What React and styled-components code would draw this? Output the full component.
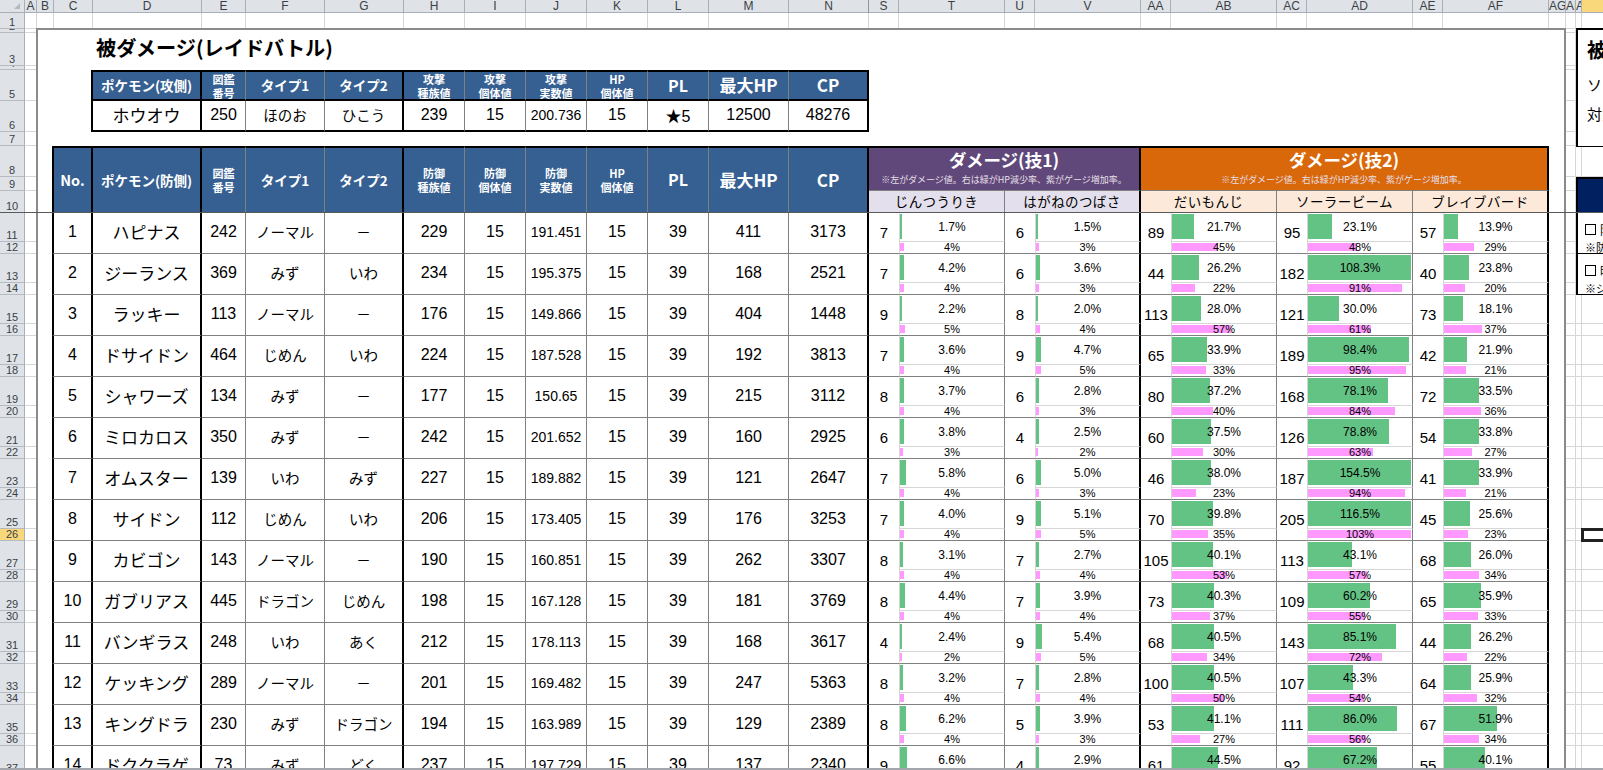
import React from 'react';
import styled, { createGlobalStyle } from 'styled-components';

const Global = createGlobalStyle`
  html, body { margin: 0; padding: 0; height: 770px; overflow: hidden; background: #fff; }
  #root { height: 770px; }
  * { box-sizing: border-box; }
`;

const SANS = `"Liberation Sans", "Noto Sans CJK JP", sans-serif`;
const HEAD = `"Noto Sans CJK JP", "Liberation Sans", sans-serif`;
const LINE = '#808080';
const LIGHT = '#d6d6d6';

const COLS = [
  ['rh', 25, ''], ['A', 12, 'A'], ['B', 17, 'B'], ['C', 39, 'C'], ['D', 109, 'D'], ['E', 44, 'E'], ['F', 79, 'F'], ['G', 79, 'G'],
  ['H', 61, 'H'], ['I', 61, 'I'], ['J', 61, 'J'], ['K', 61, 'K'], ['L', 61, 'L'], ['M', 80, 'M'], ['N', 80, 'N'],
  ['S', 30, 'S'], ['T', 106, 'T'], ['U', 30, 'U'], ['V', 106, 'V'], ['AA', 30, 'AA'], ['AB', 106, 'AB'], ['AC', 30, 'AC'],
  ['AD', 106, 'AD'], ['AE', 30, 'AE'], ['AF', 106, 'AF'], ['AG', 17, 'AG'], ['AH', 10, 'AI'], ['AJ', 6, 'A'], ['AK', 40, ''],
];
const columnTemplate = COLS.map(([n, w]) => `[${n}] ${w}px`).join(' ');

const FIXED_ROWS = [16, 4, 33, 4, 31, 31, 14, 31, 14, 22];
const ROW_COUNT = 38;
const rowHeights = Array.from({ length: ROW_COUNT }, (_, i) =>
  i < 10 ? FIXED_ROWS[i] : i % 2 === 0 ? 29 : 12
);
const rowTemplate = `13px ${rowHeights.map((h) => `${h}px`).join(' ')}`;

const Viewport = styled.div`
  height: 770px;
  width: 1603px;
  display: flex;
  flex-direction: column;
  overflow: hidden;
  font-family: ${SANS};
  color: #000;
`;
const Clip = styled.div`
  flex: 1;
  min-height: 0;
  overflow: hidden;
`;
const StatusEdge = styled.div`
  height: 2px;
  flex: none;
  background: #a3a7ad;
`;
const Sheet = styled.div`
  display: grid;
  grid-template-columns: ${columnTemplate};
  grid-template-rows: ${rowTemplate};
  width: 1603px;
`;

const Corner = styled.div`
  grid-column: rh;
  grid-row: 1;
  background: #dfe3e8;
  border-right: 1px solid #a9afb8;
  border-bottom: 1px solid #a9afb8;
  display: flex;
  align-items: flex-end;
  justify-content: flex-end;
  padding: 0 4px 3px 0;
`;
const CornerMark = styled.svg`
  width: 6px;
  height: 6px;
  fill: #b4b9c0;
`;
const ColHead = styled.div`
  grid-column: ${(p) => p.$col};
  grid-row: 1;
  background: ${(p) => (p.$active ? '#f9d87c' : '#dfe3e8')};
  border-right: 1px solid ${(p) => (p.$thick ? '#8f959d' : '#a9afb8')};
  border-bottom: 1px solid #a9afb8;
  font-size: 12px;
  line-height: 13px;
  color: #3a3f47;
  text-align: center;
  overflow: hidden;
  white-space: nowrap;
`;
const RowHead = styled.div`
  grid-column: rh;
  grid-row: ${(p) => p.$row + 1};
  background: ${(p) => (p.$active ? '#f9d87c' : '#dfe3e8')};
  border-right: 1px solid #a9afb8;
  border-bottom: 1px solid #b6bbc2;
  font-size: 11px;
  line-height: 11px;
  color: #3a3f47;
  display: flex;
  align-items: flex-end;
  justify-content: center;
  overflow: hidden;
`;
const GridLine = styled.div`
  grid-column: ${(p) => p.$col};
  grid-row: ${(p) => p.$row + 1};
  border-right: 1px solid ${LIGHT};
  border-bottom: 1px solid ${LIGHT};
`;
const Frame = styled.div`
  grid-column: B / AH;
  grid-row: 3 / -1;
  margin: -1px 0 0 -1px;
  background: #fff;
  border: 2px solid #8a8a8a;
  border-bottom: none;
`;
const FreezeLine = styled.div`
  grid-column: 1 / -1;
  grid-row: 11;
  align-self: end;
  height: 1px;
  background: #5a5a5a;
  z-index: 6;
`;

const Title = styled.div`
  grid-column: D / J;
  grid-row: 4;
  padding: 0 0 3px 3px;
  font-family: ${HEAD};
  font-weight: 700;
  font-size: 20.2px;
  line-height: 30px;
  white-space: nowrap;
  z-index: 1;
`;

const rightBorder = (k) =>
  k === 'thick' ? '2px solid #000' : k === 'grey' ? `1px solid ${LINE}` : k === 'light' ? `1px solid ${LIGHT}` : 'none';

const Cell = styled.div`
  grid-column: ${(p) => p.$col} / span ${(p) => p.$span || 1};
  grid-row: ${(p) => p.$row + 1} / span ${(p) => p.$rows || 1};
  z-index: 1;
  display: flex;
  align-items: center;
  justify-content: center;
  text-align: center;
  white-space: nowrap;
  overflow: hidden;
  border-right: ${(p) => rightBorder(p.$right)};
  border-left: ${(p) => (p.$left ? '2px solid #000' : 'none')};
  margin-left: ${(p) => (p.$left ? '-2px' : '0')};
  border-top: ${(p) => (p.$top ? '2px solid #000' : 'none')};
  border-bottom: ${(p) => p.$under || `1px solid ${LINE}`};
`;
const HeadCell = styled(Cell)`
  background: #366092;
  color: #fff;
  font-family: ${HEAD};
  font-weight: 700;
  font-size: ${(p) => p.$size || 13.5}px;
  line-height: ${(p) => (p.$size === 11 ? '14px' : '1.2')};
`;
const NameCell = styled(Cell)`
  font-family: ${HEAD};
  font-size: 17px;
  padding-bottom: 3px;
`;
const TypeCell = styled(Cell)`
  font-family: ${HEAD};
  font-size: 14.5px;
  padding-bottom: 3px;
`;
const NumCell = styled(Cell)`
  font-size: ${(p) => p.$size || 16}px;
  padding-bottom: 2px;
`;
const DamageHead = styled(Cell)`
  flex-direction: column;
  justify-content: flex-start;
  background: ${(p) => p.$bg};
  color: #fff;
  font-family: ${HEAD};
`;
const DamageTitle = styled.div`
  font-size: 17.5px;
  font-weight: 700;
  line-height: 24px;
`;
const DamageNote = styled.div`
  font-size: 9px;
  line-height: 12px;
  margin-top: 2px;
  color: #e6dfe6;
`;
const MoveHead = styled(Cell)`
  background: ${(p) => p.$bg};
  font-family: ${HEAD};
  font-size: 13.5px;
  letter-spacing: 0.4px;
  padding-bottom: 1px;
`;
const BarCell = styled(Cell)`
  display: grid;
  grid-template-columns: minmax(0, 1fr);
  grid-template-rows: minmax(0, 1fr);
  justify-content: stretch;
  justify-items: start;
  align-items: stretch;
  border-left: 1px solid ${LIGHT};
`;
const GreenBar = styled.div`
  grid-area: 1 / 1;
  margin: 1px 0 2px 0;
  background: #63c384;
`;
const PinkBar = styled.div`
  grid-area: 1 / 1;
  margin: 1px 0 2px 0;
  background: #ff99ff;
`;
const BarText = styled.div`
  grid-area: 1 / 1;
  justify-self: stretch;
  align-self: center;
  text-align: center;
  font-size: ${(p) => (p.$small ? 11 : 12)}px;
  line-height: ${(p) => (p.$small ? 11 : 14)}px;
  z-index: 1;
`;

const SideBox = styled.div`
  grid-column: AJ / -1;
  grid-row: ${(p) => p.$row + 1} / span ${(p) => p.$rows};
  z-index: 1;
  background: #fff;
  border-left: 2px solid #000;
  border-top: ${(p) => (p.$top ? '2px solid #000' : 'none')};
  border-bottom: 1px solid #000;
  overflow: hidden;
  white-space: nowrap;
`;
const InfoBox = styled(SideBox)`
  margin: -1px 0 -1px 0;
  padding: 5px 0 0 9px;
  display: flex;
  flex-direction: column;
  font-family: ${HEAD};
`;
const InfoTitle = styled.div`
  font-size: 20px;
  font-weight: 700;
  line-height: 30px;
  margin-bottom: 9px;
`;
const InfoLine = styled.div`
  font-size: 15px;
  line-height: 22px;
  margin-bottom: 7px;
`;
const NavyBox = styled(SideBox)`
  background: #002060;
`;
const OptionBox = styled(SideBox)`
  padding: 11px 0 0 7px;
  display: flex;
  flex-direction: column;
  gap: 7px;
  font-family: ${HEAD};
`;
const OptionRow = styled.div`
  display: flex;
  align-items: center;
  gap: 4px;
  font-size: 12px;
  height: 11px;
`;
const CheckSquare = styled.span`
  width: 11px;
  height: 11px;
  border: 1px solid #000;
  flex: none;
`;
const OptionNote = styled.div`
  font-size: 11px;
  line-height: 11px;
`;
const ActiveCell = styled.div`
  grid-column: AK;
  grid-row: 27;
  z-index: 2;
  margin: -1px -20px -1px -1px;
  border: 3px solid #222;
  background: #fff;
`;

const Two = ({ a, b }) => (
  <>
    {a}
    <br />
    {b}
  </>
);

const DASH = '－';
const pokemon = [
  ['ハピナス', 242, 'ノーマル', DASH, 229, '191.451', 411, 3173, [7, 1.7, 4], [6, 1.5, 3], [89, 21.7, 45], [95, 23.1, 48], [57, 13.9, 29]],
  ['ジーランス', 369, 'みず', 'いわ', 234, '195.375', 168, 2521, [7, 4.2, 4], [6, 3.6, 3], [44, 26.2, 22], [182, 108.3, 91], [40, 23.8, 20]],
  ['ラッキー', 113, 'ノーマル', DASH, 176, '149.866', 404, 1448, [9, 2.2, 5], [8, 2.0, 4], [113, 28.0, 57], [121, 30.0, 61], [73, 18.1, 37]],
  ['ドサイドン', 464, 'じめん', 'いわ', 224, '187.528', 192, 3813, [7, 3.6, 4], [9, 4.7, 5], [65, 33.9, 33], [189, 98.4, 95], [42, 21.9, 21]],
  ['シャワーズ', 134, 'みず', DASH, 177, '150.65', 215, 3112, [8, 3.7, 4], [6, 2.8, 3], [80, 37.2, 40], [168, 78.1, 84], [72, 33.5, 36]],
  ['ミロカロス', 350, 'みず', DASH, 242, '201.652', 160, 2925, [6, 3.8, 3], [4, 2.5, 2], [60, 37.5, 30], [126, 78.8, 63], [54, 33.8, 27]],
  ['オムスター', 139, 'いわ', 'みず', 227, '189.882', 121, 2647, [7, 5.8, 4], [6, 5.0, 3], [46, 38.0, 23], [187, 154.5, 94], [41, 33.9, 21]],
  ['サイドン', 112, 'じめん', 'いわ', 206, '173.405', 176, 3253, [7, 4.0, 4], [9, 5.1, 5], [70, 39.8, 35], [205, 116.5, 103], [45, 25.6, 23]],
  ['カビゴン', 143, 'ノーマル', DASH, 190, '160.851', 262, 3307, [8, 3.1, 4], [7, 2.7, 4], [105, 40.1, 53], [113, 43.1, 57], [68, 26.0, 34]],
  ['ガブリアス', 445, 'ドラゴン', 'じめん', 198, '167.128', 181, 3769, [8, 4.4, 4], [7, 3.9, 4], [73, 40.3, 37], [109, 60.2, 55], [65, 35.9, 33]],
  ['バンギラス', 248, 'いわ', 'あく', 212, '178.113', 168, 3617, [4, 2.4, 2], [9, 5.4, 5], [68, 40.5, 34], [143, 85.1, 72], [44, 26.2, 22]],
  ['ケッキング', 289, 'ノーマル', DASH, 201, '169.482', 247, 5363, [8, 3.2, 4], [7, 2.8, 4], [100, 40.5, 50], [107, 43.3, 54], [64, 25.9, 32]],
  ['キングドラ', 230, 'みず', 'ドラゴン', 194, '163.989', 129, 2389, [8, 6.2, 4], [5, 3.9, 3], [53, 41.1, 27], [111, 86.0, 56], [67, 51.9, 34]],
  ['ドククラゲ', 73, 'みず', 'どく', 237, '197.729', 137, 2340, [9, 6.6, 5], [4, 2.9, 2], [61, 44.5, 31], [92, 67.2, 46], [55, 40.1, 28]],
];

const barPx = (pct) => Math.min(103, Math.max(1, Math.round(pct * 1.03)));

const MoveCells = ({ cols, data, row, last }) => {
  const [numCol, barCol] = cols;
  const [dmg, hp, gauge] = data;
  return (
    <>
      <NumCell $col={numCol} $row={row} $rows={2} $size={15}>{dmg}</NumCell>
      <BarCell $col={barCol} $row={row} $right={last ? 'thick' : 'grey'} $under={`1px solid ${LIGHT}`}>
        <GreenBar style={{ width: barPx(hp) }} />
        <BarText>{hp.toFixed(1)}%</BarText>
      </BarCell>
      <BarCell $col={barCol} $row={row + 1} $right={last ? 'thick' : 'grey'}>
        <PinkBar style={{ width: barPx(gauge) }} />
        <BarText $small>{gauge}%</BarText>
      </BarCell>
    </>
  );
};

const HeaderCols = ({ row, rows, top, under, first, name, stat }) => (
  <>
    {first && (
      <HeadCell $col="C" $row={row} $rows={rows} $top={top} $left $right="thick" $under={under} $size={14.5}>No.</HeadCell>
    )}
    <HeadCell $col="D" $row={row} $rows={rows} $top={top} $left={!first} $right="thick" $under={under}>{name}</HeadCell>
    <HeadCell $col="E" $row={row} $rows={rows} $top={top} $right="grey" $under={under} $size={11}><Two a="図鑑" b="番号" /></HeadCell>
    <HeadCell $col="F" $row={row} $rows={rows} $top={top} $right="grey" $under={under}>タイプ1</HeadCell>
    <HeadCell $col="G" $row={row} $rows={rows} $top={top} $right="thick" $under={under}>タイプ2</HeadCell>
    <HeadCell $col="H" $row={row} $rows={rows} $top={top} $right="grey" $under={under} $size={11}><Two a={stat} b="種族値" /></HeadCell>
    <HeadCell $col="I" $row={row} $rows={rows} $top={top} $right="grey" $under={under} $size={11}><Two a={stat} b="個体値" /></HeadCell>
    <HeadCell $col="J" $row={row} $rows={rows} $top={top} $right="grey" $under={under} $size={11}><Two a={stat} b="実数値" /></HeadCell>
    <HeadCell $col="K" $row={row} $rows={rows} $top={top} $right="grey" $under={under} $size={11}><Two a="HP" b="個体値" /></HeadCell>
    <HeadCell $col="L" $row={row} $rows={rows} $top={top} $right="grey" $under={under} $size={16}>PL</HeadCell>
    <HeadCell $col="M" $row={row} $rows={rows} $top={top} $right="grey" $under={under} $size={17}>最大HP</HeadCell>
    <HeadCell $col="N" $row={row} $rows={rows} $top={top} $right="thick" $under={under} $size={17}>CP</HeadCell>
  </>
);

const NOTE = '※左がダメージ値。右は緑がHP減少率、紫がゲージ増加率。';
const BLACK2 = '2px solid #000';
const DARK1 = '1px solid #333';

export default function App() {
  const gridCols = ['A', 'AH', 'AJ', 'AK'];
  return (
    <Viewport>
      <Global />
      <Clip>
        <Sheet>
          <Corner>
            <CornerMark viewBox="0 0 6 6"><polygon points="6,0 6,6 0,6" /></CornerMark>
          </Corner>
          {COLS.slice(1).map(([n, , label]) => (
            <ColHead key={n} $col={n} $active={n === 'AK'} $thick={n === 'N'}>{label}</ColHead>
          ))}
          {rowHeights.map((_, i) => (
            <RowHead key={i} $row={i + 1} $active={i + 1 === 26}>{i + 1}</RowHead>
          ))}
          {COLS.slice(1).map(([n]) => (
            <GridLine key={n} $col={n} $row={1} />
          ))}
          {gridCols.flatMap((c) =>
            rowHeights.slice(1).map((_, i) => <GridLine key={c + i} $col={c} $row={i + 2} />)
          )}
          <Frame />
          <FreezeLine />

          <Title>被ダメージ(レイドバトル)</Title>

          <HeaderCols row={5} rows={1} top under={BLACK2} name="ポケモン(攻側)" stat="攻撃" />
          <NameCell $col="D" $row={6} $left $right="thick" $under={BLACK2}>ホウオウ</NameCell>
          <NumCell $col="E" $row={6} $right="grey" $under={BLACK2}>250</NumCell>
          <TypeCell $col="F" $row={6} $right="grey" $under={BLACK2}>ほのお</TypeCell>
          <TypeCell $col="G" $row={6} $right="thick" $under={BLACK2}>ひこう</TypeCell>
          <NumCell $col="H" $row={6} $right="grey" $under={BLACK2}>239</NumCell>
          <NumCell $col="I" $row={6} $right="grey" $under={BLACK2}>15</NumCell>
          <NumCell $col="J" $row={6} $right="grey" $under={BLACK2} $size={14}>200.736</NumCell>
          <NumCell $col="K" $row={6} $right="grey" $under={BLACK2}>15</NumCell>
          <NumCell $col="L" $row={6} $right="grey" $under={BLACK2}>★5</NumCell>
          <NumCell $col="M" $row={6} $right="grey" $under={BLACK2}>12500</NumCell>
          <NumCell $col="N" $row={6} $right="thick" $under={BLACK2}>48276</NumCell>

          <HeaderCols row={8} rows={3} top first under={DARK1} name="ポケモン(防側)" stat="防御" />

          <DamageHead $col="S" $span={4} $row={8} $rows={2} $top $bg="#60497a" $right="thick">
            <DamageTitle>ダメージ(技1)</DamageTitle>
            <DamageNote>{NOTE}</DamageNote>
          </DamageHead>
          <DamageHead $col="AA" $span={6} $row={8} $rows={2} $top $bg="#d9680a" $right="thick">
            <DamageTitle>ダメージ(技2)</DamageTitle>
            <DamageNote>{NOTE}</DamageNote>
          </DamageHead>
          <MoveHead $col="S" $span={2} $row={10} $bg="#e4dfec" $right="grey" $under={DARK1}>じんつうりき</MoveHead>
          <MoveHead $col="U" $span={2} $row={10} $bg="#e4dfec" $right="thick" $under={DARK1}>はがねのつばさ</MoveHead>
          <MoveHead $col="AA" $span={2} $row={10} $bg="#fde9d9" $right="grey" $under={DARK1}>だいもんじ</MoveHead>
          <MoveHead $col="AC" $span={2} $row={10} $bg="#fde9d9" $right="grey" $under={DARK1}>ソーラービーム</MoveHead>
          <MoveHead $col="AE" $span={2} $row={10} $bg="#fde9d9" $right="thick" $under={DARK1}>ブレイブバード</MoveHead>

          {pokemon.map((p, i) => {
            const r = 11 + i * 2;
            const [name, dex, t1, t2, base, real, hp, cp, m1, m2, m3, m4, m5] = p;
            return (
              <React.Fragment key={name}>
                <NumCell $col="C" $row={r} $rows={2} $left $right="thick">{i + 1}</NumCell>
                <NameCell $col="D" $row={r} $rows={2} $right="thick">{name}</NameCell>
                <NumCell $col="E" $row={r} $rows={2} $right="grey">{dex}</NumCell>
                <TypeCell $col="F" $row={r} $rows={2} $right="grey">{t1}</TypeCell>
                <TypeCell $col="G" $row={r} $rows={2} $right="thick">{t2}</TypeCell>
                <NumCell $col="H" $row={r} $rows={2} $right="grey">{base}</NumCell>
                <NumCell $col="I" $row={r} $rows={2} $right="grey">15</NumCell>
                <NumCell $col="J" $row={r} $rows={2} $right="grey" $size={14}>{real}</NumCell>
                <NumCell $col="K" $row={r} $rows={2} $right="grey">15</NumCell>
                <NumCell $col="L" $row={r} $rows={2} $right="grey">39</NumCell>
                <NumCell $col="M" $row={r} $rows={2} $right="grey">{hp}</NumCell>
                <NumCell $col="N" $row={r} $rows={2} $right="thick">{cp}</NumCell>
                <MoveCells cols={['S', 'T']} data={m1} row={r} />
                <MoveCells cols={['U', 'V']} data={m2} row={r} last />
                <MoveCells cols={['AA', 'AB']} data={m3} row={r} />
                <MoveCells cols={['AC', 'AD']} data={m4} row={r} />
                <MoveCells cols={['AE', 'AF']} data={m5} row={r} last />
              </React.Fragment>
            );
          })}

          <InfoBox $row={2} $rows={6} $top>
            <InfoTitle>被ダメージ</InfoTitle>
            <InfoLine>ソーラービーム</InfoLine>
            <InfoLine>対象</InfoLine>
          </InfoBox>
          <NavyBox $row={9} $rows={2} $top />
          <OptionBox $row={11} $rows={2}>
            <OptionRow><CheckSquare />防御</OptionRow>
            <OptionNote>※防御</OptionNote>
          </OptionBox>
          <OptionBox $row={13} $rows={2}>
            <OptionRow><CheckSquare />時間</OptionRow>
            <OptionNote>※ジム</OptionNote>
          </OptionBox>
          <ActiveCell />
        </Sheet>
      </Clip>
      <StatusEdge />
    </Viewport>
  );
}
